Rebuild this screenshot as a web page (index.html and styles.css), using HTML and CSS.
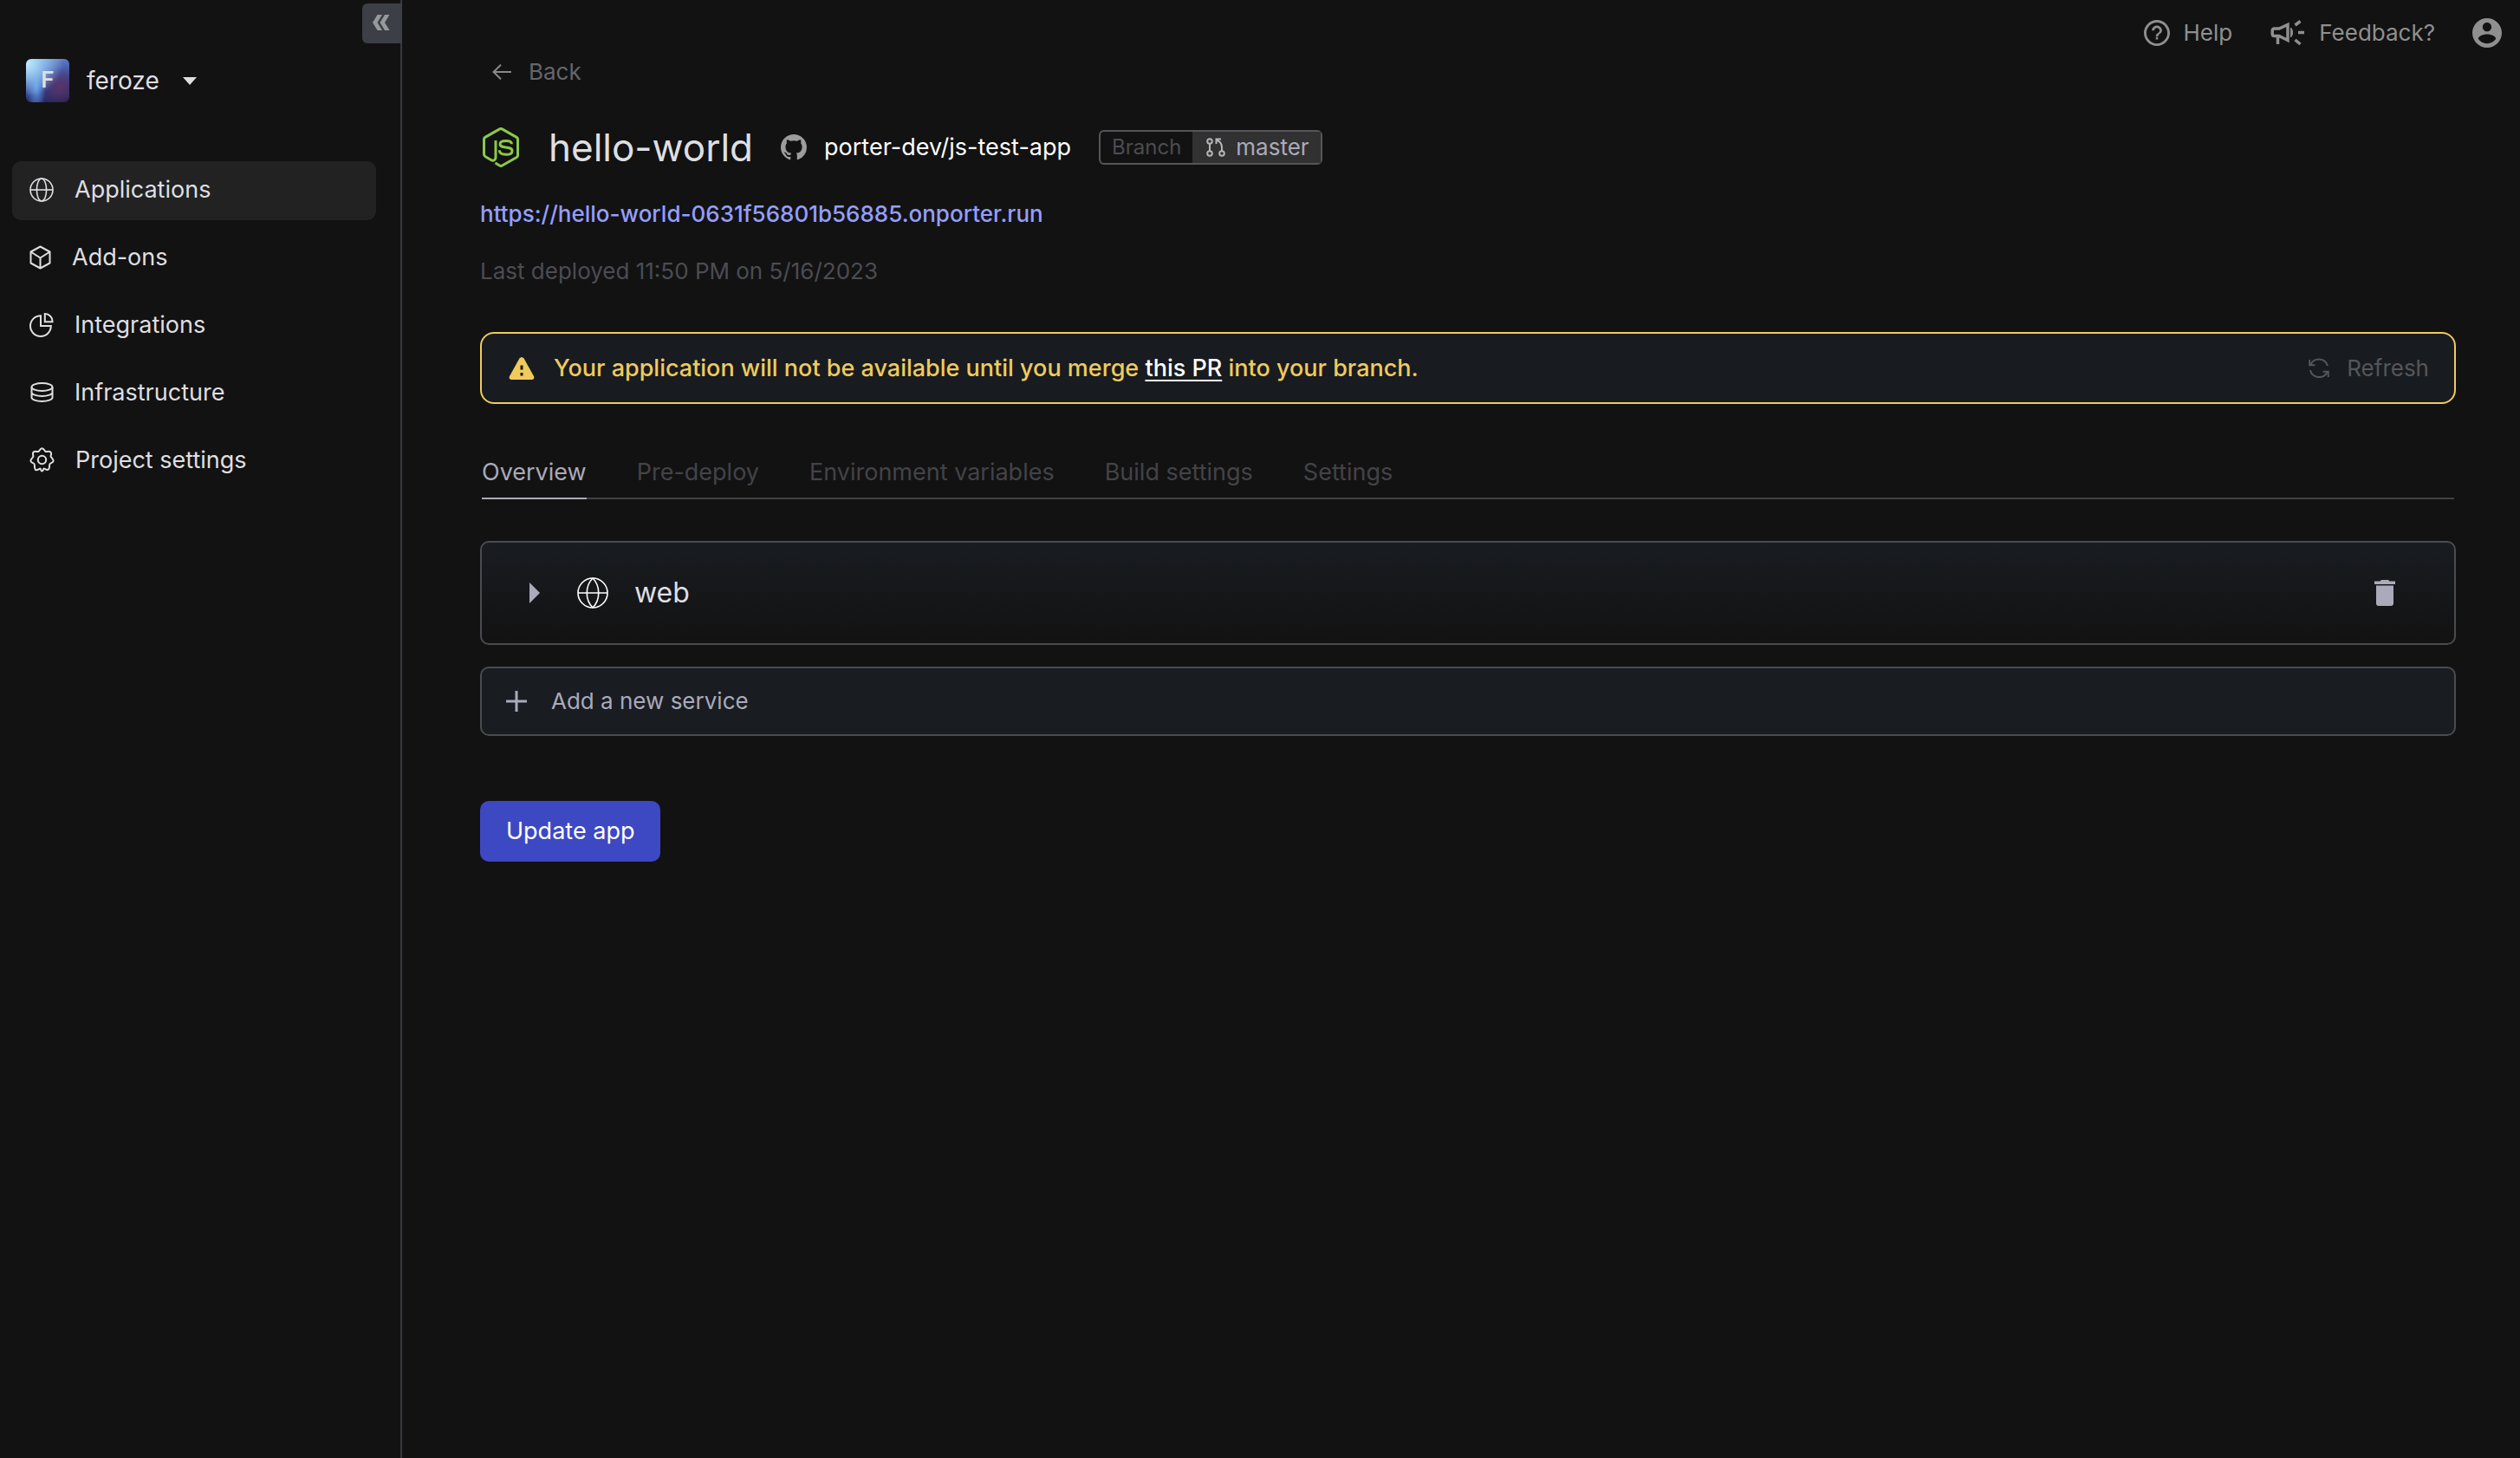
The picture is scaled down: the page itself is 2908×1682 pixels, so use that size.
FILE: index.html
```html
<!DOCTYPE html>
<html lang="en">
<head>
<meta charset="utf-8">
<meta name="viewport" content="width=device-width, initial-scale=1">
<title>hello-world</title>
<link rel="stylesheet" href="styles.css">
</head>
<body>
<div class="app">
  <aside class="sidebar">
    <button class="collapse" type="button" aria-label="Collapse sidebar">
      <svg width="20" height="18" viewBox="0 0 20 18"><path d="M5.500 0H11L5.500 9 11 18H5.500L0 9zM14 0h5.500L14 9l5.500 9H14L8.500 9z" fill="#98999d"/></svg>
    </button>
    <button class="project" type="button">
      <span class="avatar">F</span>
      <span class="project-name">feroze</span>
      <svg width="16" height="9" viewBox="0 0 16 9"><path d="M0 0h16L8 9z" fill="#dfdfe1"/></svg>
    </button>
    <nav class="nav">
      <a class="nav-item active" href="#applications">
        <svg width="28" height="28" viewBox="0 0 28 28" fill="none" stroke="currentColor" stroke-width="1.600"><circle cx="14" cy="14" r="13"/><ellipse cx="14" cy="14" rx="5.600" ry="13"/><path d="M1 14h26"/></svg>
        <span>Applications</span>
      </a>
      <a class="nav-item" href="#add-ons">
        <svg width="25" height="28" viewBox="0 0 25 28" fill="none" stroke="currentColor" stroke-width="2" stroke-linejoin="round"><path d="M12.500 1.500L23.500 7.500V20.500L12.500 26.500L1.500 20.500V7.500zM1.500 7.500L12.500 14.500L23.500 7.500M12.500 14.500V26.500"/></svg>
        <span>Add-ons</span>
      </a>
      <a class="nav-item" href="#integrations">
        <svg width="28" height="28" viewBox="0 0 28 28" fill="none" stroke="currentColor" stroke-width="2"><path d="M13 3.200A11.900 11.900 0 1 0 24.800 15H13z"/><path d="M17.800 1V10.200H26.500A8.700 8.700 0 0 0 17.800 1z"/></svg>
        <span>Integrations</span>
      </a>
      <a class="nav-item" href="#infrastructure">
        <svg width="28" height="28" viewBox="0 0 28 28" fill="none" stroke="currentColor" stroke-width="2"><ellipse cx="14.500" cy="7.500" rx="12" ry="4.500"/><path d="M2.500 7.500v12c0 2.500 5.400 4.500 12 4.500s12-2 12-4.500v-12M2.500 13.500c0 2.500 5.400 4.500 12 4.500s12-2 12-4.500"/></svg>
        <span>Infrastructure</span>
      </a>
      <a class="nav-item" href="#settings">
        <svg width="29" height="29" viewBox="0 0 29 29" fill="none" stroke="currentColor" stroke-width="2" stroke-linejoin="round"><circle cx="14.500" cy="14.500" r="4.700"/><path d="M14.500 1.300C17 1.300 17 4.200 18.500 4.900S22 4.200 24 5.200C26.300 6.800 24.400 9 24.600 10.500S27.800 13.500 27.600 15.800C27 18.300 24.400 17.900 23.500 19.200S23.800 22.800 22.200 25.200C20 27.200 18.500 25 17 24.600C15.500 24.200 16.200 27.600 14.500 27.600C12.800 27.600 13.500 24.200 12 24.600C10.500 25 9 27.200 6.800 25.800C5.200 23.500 6.400 20.500 5.500 19.200S2 18.300 1.400 15.800C1.200 13.500 4.200 12 4.400 10.500S2.700 6.800 5 5.200C7 4.200 9 5.600 10.500 4.900S12 1.300 14.500 1.300z"/></svg>
        <span>Project settings</span>
      </a>
    </nav>
  </aside>

  <div class="main">
    <header class="topbar">
      <a class="top-link" href="#help">
        <svg width="30" height="30" viewBox="0 0 24 24" fill="#8f8f8f"><path d="M11 18h2v-2h-2v2zm1-18C5.400 0 0 5.400 0 12s5.400 12 12 12 12-5.400 12-12S18.600 0 12 0zm0 21.700c-5.300 0-9.700-4.400-9.700-9.700S6.700 2.300 12 2.300s9.700 4.400 9.700 9.700-4.400 9.700-9.700 9.700zM12 5.200c-2.600 0-4.700 2-4.700 4.600h2.200c0-1.300 1.100-2.500 2.500-2.500s2.500 1.100 2.500 2.400c0 2.400-3.600 2.100-3.600 5.700h2.200c0-2.600 3.600-2.900 3.600-5.700 0-2.500-2.100-4.500-4.700-4.500z"/></svg>
        <span>Help</span>
      </a>
      <a class="top-link feedback" href="#feedback">
        <svg width="40" height="32" viewBox="0 0 40 32" fill="none" stroke="#8f8f8f" stroke-width="3.500"><path d="M10 11H4.500C3 11 2.200 12 2.200 13.500V17C2.200 18.500 3 19.500 4.500 19.500H10L20 24.500V6.500zM8.500 20V29M32 15.500h7M28.500 7L34.500 2.500M28.500 24L34.500 29"/><path d="M23.500 10c2.800 3 2.800 8 0 11z" fill="#8f8f8f" stroke-width="1"/></svg>
        <span>Feedback?</span>
      </a>
      <a class="account" href="#account" aria-label="Account">
        <svg width="34" height="34" viewBox="2 2 20 20" fill="#8f8f8f"><path d="M12 2C6.480 2 2 6.480 2 12s4.480 10 10 10 10-4.480 10-10S17.520 2 12 2zm0 3c1.660 0 3 1.340 3 3s-1.340 3-3 3-3-1.340-3-3 1.340-3 3-3zm0 14.200c-2.500 0-4.710-1.280-6-3.220.030-1.990 4-3.080 6-3.080 1.990 0 5.970 1.090 6 3.080-1.290 1.940-3.500 3.220-6 3.220z"/></svg>
      </a>
    </header>

    <main class="content">
      <a class="back" href="#back">
        <svg width="22" height="18" viewBox="0 0 22 18" fill="none" stroke="#88888b" stroke-width="2"><path d="M22 9H1.500M10 .7L1.500 9L10 17.300"/></svg>
        <span>Back</span>
      </a>

      <div class="title-row">
        <svg class="node" width="42" height="46" viewBox="0 0 42 46" fill="none" stroke="#8cc84b" stroke-width="3" stroke-linejoin="round"><path d="M15 15V34.500C15 37.500 12.500 39 10 37.700L3.200 33.700Q1.500 32.700 1.500 31V13.500Q1.500 12.200 2.800 11.400L20 1.600Q21 1 22 1.600L39.200 11.400Q40.500 12.200 40.500 13.500V32.500Q40.500 33.700 39.200 34.500L22 44.200Q21 44.800 20 44.200L14.500 41"/><path d="M33.500 19.200C33.500 16.500 31 15.500 27 15.500C23 15.500 20 16.500 20 19.300C20 25.300 34 20.500 34 27.200C34 30 31 31.300 27 31.300C22 31.300 19.300 29.800 19.300 26.300"/></svg>
        <h1>hello-world</h1>
        <a class="repo" href="#repo">
          <svg width="30" height="30" viewBox="0 0 16 16" fill="#9c9c9c"><path d="M8 0C3.580 0 0 3.580 0 8c0 3.540 2.290 6.530 5.470 7.590.4.070.55-.17.55-.38 0-.19-.01-.82-.01-1.490-2.010.37-2.530-.49-2.690-.94-.09-.23-.48-.94-.82-1.130-.28-.15-.68-.52-.01-.53.63-.01 1.080.58 1.230.82.720 1.210 1.870.87 2.330.66.070-.52.280-.87.510-1.070-1.780-.2-3.640-.89-3.640-3.950 0-.87.310-1.590.82-2.150-.08-.2-.36-1.020.08-2.120 0 0 .67-.21 2.200.82.640-.18 1.320-.27 2-.27s1.360.09 2 .27c1.530-1.040 2.200-.82 2.200-.82.440 1.100.16 1.920.08 2.120.51.560.82 1.270.82 2.150 0 3.070-1.870 3.750-3.650 3.950.29.250.54.730.54 1.480 0 1.070-.01 1.930-.01 2.200 0 .21.150.46.550.38A8.010 8.010 0 0 0 16 8c0-4.420-3.580-8-8-8z"/></svg>
          <span>porter-dev/js-test-app</span>
        </a>
        <div class="tag">
          <span class="tag-label">Branch</span>
          <span class="tag-value">
            <svg width="22" height="22" viewBox="0 0 22 22" fill="none" stroke="#b5b5b8" stroke-width="2"><circle cx="4" cy="4" r="2.800"/><circle cx="4" cy="18" r="2.800"/><circle cx="18" cy="18" r="2.800"/><path d="M4 7v8M18 15V11C18 7 16 4 11.500 2.500M17 1.500H11.500V7"/></svg>
            <span>master</span>
          </span>
        </div>
      </div>

      <a class="url" href="#open">https://hello-world-0631f56801b56885.onporter.run</a>
      <p class="deployed">Last deployed 11:50 PM on 5/16/2023</p>

      <div class="banner" role="alert">
        <svg width="30" height="26" viewBox="0 0 30 26"><path d="M12.400 1.500Q15-1.500 17.600 1.500L29 22Q30.400 25.500 27 26H3Q-.4 25.500 1 22z" fill="#efcb5c"/><path d="M13.500 9.500h3v5h-3zM13.500 18h3v3.500h-3z" fill="#181b20"/></svg>
        <p>Your application will not be available until you merge <a href="#pr">this PR</a> into your branch.</p>
        <button class="refresh" type="button">
          <svg width="24" height="24" viewBox="0 0 24 24" fill="none" stroke="currentColor" stroke-width="2"><path d="M22 9A10.500 10.500 0 0 0 2.500 7.500M1.200 2V8.200H7.500M2 14A10.500 10.500 0 0 0 21.500 16.500M22.800 22V15.800H16.500"/></svg>
          <span>Refresh</span>
        </button>
      </div>

      <nav class="tabs">
        <a class="tab selected" href="#overview">Overview</a>
        <a class="tab" href="#pre-deploy">Pre-deploy</a>
        <a class="tab" href="#env">Environment variables</a>
        <a class="tab" href="#build">Build settings</a>
        <a class="tab" href="#app-settings">Settings</a>
      </nav>

      <section class="service">
        <button class="expand" type="button">
          <svg class="arrow" width="12" height="24" viewBox="0 0 12 24"><path d="M0 0L12 12L0 24z" fill="#aaaabb"/></svg>
          <svg class="globe" width="36" height="36" viewBox="0 0 36 36" fill="none" stroke="#fff" stroke-width="1.600"><circle cx="18" cy="18" r="17"/><path d="M1 18h34M18 1C9 10 9 26 18 35C27 26 27 10 18 1z"/></svg>
          <span>web</span>
        </button>
        <button class="trash" type="button" aria-label="Delete service">
          <svg width="24" height="30" viewBox="0 0 24 30" fill="#aaaabb"><path d="M0 1.500H6.500L8 0H16L17.500 1.500H24V5H0zM2 6.500H22V27Q22 30 19 30H5Q2 30 2 27z"/></svg>
        </button>
      </section>

      <button class="add" type="button">
        <svg width="24" height="24" viewBox="0 0 24 24" stroke="#aaaabb" stroke-width="3"><path d="M12 0v24M0 12h24"/></svg>
        <span>Add a new service</span>
      </button>

      <button class="update" type="button">Update app</button>
    </main>
  </div>
</div>
</body>
</html>
```
FILE: styles.css
```css
* { box-sizing: border-box; }

body {
  margin: 0;
  background: #121212;
  color: #dfdfe1;
  font: 26px/32px Inter, "Noto Sans", sans-serif;
}

a { color: inherit; text-decoration: none; }
p, h1 { margin: 0; }
svg { display: block; flex: none; }

button {
  margin: 0;
  padding: 0;
  border: 0;
  background: none;
  color: inherit;
  font: inherit;
  cursor: pointer;
}

.app { display: flex; min-height: 100vh; }

/* Sidebar */
.sidebar {
  flex: none;
  width: 464px;
  padding-top: 4px;
  border-right: 2px solid #38383d;
  display: flex;
  flex-direction: column;
}

.collapse {
  align-self: flex-end;
  display: flex;
  align-items: center;
  width: 46px;
  height: 46px;
  margin-right: -2px;
  padding: 0 0 2px 12px;
  border-radius: 6px 0 0 6px;
  background: #3d3f47;
}

.project {
  display: flex;
  align-items: center;
  align-self: flex-start;
  margin: 18px 0 68px 30px;
}

.avatar {
  width: 50px;
  height: 50px;
  margin-right: 20px;
  border-radius: 6px;
  line-height: 48px;
  font-weight: 600;
  text-align: center;
  background:
    radial-gradient(ellipse at 0 10%, #c2ecff 0, rgba(160, 215, 250, 0.6) 30%, rgba(120, 170, 230, 0) 60%),
    radial-gradient(ellipse 22% 60% at 24% 65%, #5f96e4 0, rgba(80, 130, 220, 0) 100%),
    radial-gradient(circle at 78% 65%, #5a3468 0, rgba(80, 50, 110, 0) 45%),
    linear-gradient(160deg, #7fa8e4 0, #4a5fae 40%, #2d3579 70%, #211c4a 100%);
}

.project-name { margin-right: 27px; font-size: 28px; }

.nav { display: flex; flex-direction: column; gap: 10px; padding: 0 28px 0 14px; }

.nav-item {
  display: flex;
  align-items: center;
  gap: 24px;
  height: 68px;
  padding: 0 20px 3px;
  border-radius: 10px;
  font-size: 27px;
}

.active { background: #222; }

/* Main column */
.main { flex: 1; min-width: 0; }

.topbar {
  display: flex;
  align-items: center;
  justify-content: flex-end;
  padding: 19px 21px 10px;
  color: #8f8f8f;
}

.top-link { display: flex; align-items: center; gap: 16px; height: 38px; }
.feedback { margin: 0 43px 0 44px; }

.content {
  display: flex;
  flex-direction: column;
  align-items: stretch;
  padding: 0 74px 0 90px;
}

.back {
  align-self: flex-start;
  display: flex;
  align-items: center;
  gap: 20px;
  padding-left: 14px;
  color: #65656d;
}

.title-row { display: flex; align-items: center; height: 48px; margin: 47px 0 37px; }
.node { margin: 0 34px 0 3px; }
h1 { font-size: 44px; line-height: 48px; font-weight: 400; }
.repo { display: flex; align-items: center; gap: 20px; margin: 0 32px; color: #fff; font-size: 27px; }

.tag {
  display: flex;
  height: 40px;
  line-height: 36px;
  border: 2px solid #55555a;
  border-radius: 6px;
}

.tag-label { padding: 0 13px; color: #4c4c50; font-size: 24px; }

.tag-value {
  display: flex;
  align-items: center;
  gap: 12px;
  padding: 0 13px 0 16px;
  background: #313131;
  color: #aaaabb;
}

.url { align-self: flex-start; color: #949eff; font-weight: 500; }
.deployed { margin: 34px 0 54px; color: #4c4c52; }

.banner {
  display: flex;
  align-items: center;
  padding: 24px 29px 23px 31px;
  border: 2px solid #efcb5c;
  border-radius: 16px;
  background: #181b20;
  color: #efcb5c;
}

.banner p { flex: 1; margin-left: 22px; font-size: 27px; font-weight: 500; }
.banner a { color: #fff; text-decoration: underline; text-decoration-thickness: 2px; text-underline-offset: 4px; }
.refresh { display: flex; align-items: center; gap: 20px; color: #55565a; }

.tabs {
  display: flex;
  gap: 58px;
  margin: 63px 2px 48px;
  border-bottom: 2px solid #414146;
  font-size: 27px;
}

.tab { margin-bottom: -2px; padding-bottom: 13px; border-bottom: 2px solid transparent; color: #434348; }
.selected { border-color: #aaaabb; color: #aaaabb; }

.service {
  display: flex;
  align-items: center;
  justify-content: space-between;
  height: 120px;
  border: 2px solid #494b4f;
  border-radius: 10px;
  background: linear-gradient(#191c21, #121212);
  font-size: 32px;
}

.expand { display: flex; align-items: center; padding-left: 55px; }
.globe { margin: 0 30px 0 43px; }
.trash { margin-right: 68px; }

.add {
  display: flex;
  align-items: center;
  gap: 28px;
  height: 80px;
  margin: 25px 0 75px;
  padding: 0 28px;
  border: 2px solid #494b4f;
  border-radius: 10px;
  background: #191c21;
  color: #aaaabb;
}

.update {
  align-self: flex-start;
  padding: 19px 30px;
  border-radius: 10px;
  background: #3d48c3;
  color: #fff;
  font-size: 27px;
}
```
